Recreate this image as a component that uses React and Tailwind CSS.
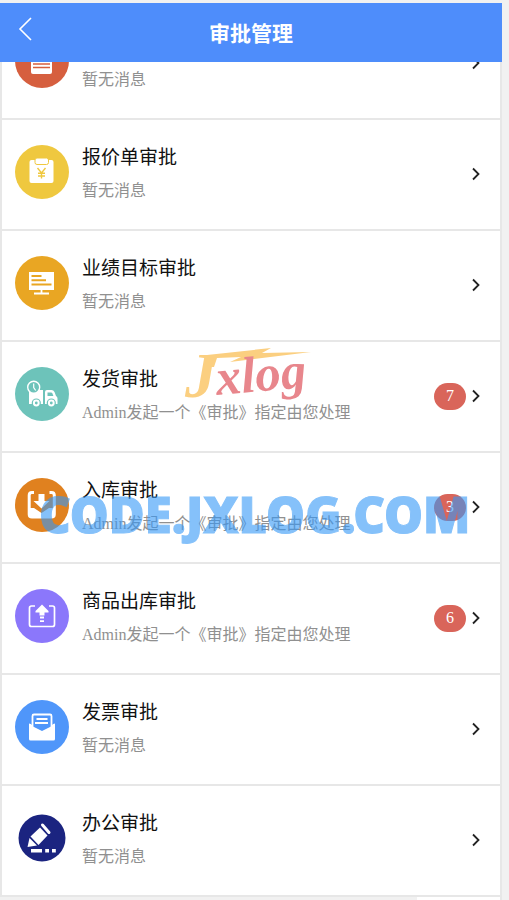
import { useState } from "react";

const EMPTY = "暂无消息";
const PENDING = "Admin发起一个《审批》指定由您处理";

const approvals = [
  { id: "order", title: "订单审批", message: EMPTY, count: 0, Icon: OrderIcon },
  { id: "quote", title: "报价单审批", message: EMPTY, count: 0, Icon: QuoteIcon },
  { id: "target", title: "业绩目标审批", message: EMPTY, count: 0, Icon: TargetIcon },
  { id: "delivery", title: "发货审批", message: PENDING, count: 7, Icon: DeliveryIcon },
  { id: "inbound", title: "入库审批", message: PENDING, count: 3, Icon: InboundIcon },
  { id: "outbound", title: "商品出库审批", message: PENDING, count: 6, Icon: OutboundIcon },
  { id: "invoice", title: "发票审批", message: EMPTY, count: 0, Icon: InvoiceIcon },
  { id: "office", title: "办公审批", message: EMPTY, count: 0, Icon: OfficeIcon },
];

function RoundIcon({ color, r = 27, children }) {
  return (
    <svg viewBox="0 0 54 54" className="h-[54px] w-[54px] shrink-0 self-start" aria-hidden="true">
      <circle cx="27" cy="27" r={r} fill={color} />
      {children}
    </svg>
  );
}

function OrderIcon() {
  return (
    <RoundIcon color="#d65f3f">
      <rect x="16" y="13" width="21" height="27" rx="2" fill="#fff" />
      <path d="M18 25h17M18 30h17M18 33.500h17" stroke="#d65f3f" strokeWidth="1.300" />
    </RoundIcon>
  );
}

function QuoteIcon() {
  return (
    <RoundIcon color="#efc83f">
      <rect x="14.500" y="15" width="24" height="23" rx="2" fill="#fff" />
      <rect x="20" y="13" width="13.500" height="6.500" rx="2" fill="#fff" stroke="#efc83f" strokeWidth="1" />
      <path
        d="M22.500 23l4 5 4-5M26.500 28v5.500M23 28.300h7M23 31h7"
        fill="none"
        stroke="#efc83f"
        strokeWidth="1.400"
      />
    </RoundIcon>
  );
}

function TargetIcon() {
  return (
    <RoundIcon color="#e9a623">
      <path d="M14 16h25v18H14z" fill="#fff" />
      <path d="M26.500 34v3.500M19 37.500h15" stroke="#fff" strokeWidth="1.800" />
      <path d="M16.500 20h10M16.500 24.200h14.500M16.500 28.500h20" stroke="#e9a623" strokeWidth="2" />
    </RoundIcon>
  );
}

function DeliveryIcon() {
  return (
    <RoundIcon color="#6dc3ba">
      <path d="M14 23h14v14H14z" fill="#fff" />
      <path d="M30 25q0-2 2-2h4.500q2 0 3 2l1.500 4q1.500.8 1.500 2.500V37H30z" fill="#fff" />
      <path d="M32.500 25.500h3.500q1 0 1.400 1l1 2.500h-5.900z" fill="#6dc3ba" />
      <circle cx="18.700" cy="20.300" r="6" fill="#6dc3ba" stroke="#fff" strokeWidth="1.400" />
      <path d="M18.700 16.500v4l2 3" fill="none" stroke="#fff" strokeWidth="1.200" />
      <circle cx="21.300" cy="36" r="4.600" fill="#6dc3ba" />
      <circle cx="36.300" cy="36" r="4.600" fill="#6dc3ba" />
      <circle cx="21.300" cy="36" r="2.400" fill="none" stroke="#fff" strokeWidth="2" />
      <circle cx="36.300" cy="36" r="2.400" fill="none" stroke="#fff" strokeWidth="2" />
    </RoundIcon>
  );
}

function InboundIcon() {
  return (
    <RoundIcon color="#e0811f">
      <path
        d="M19 14.500h-2q-2.800 0-2.800 2.800v19q0 2.800 2.800 2.800h19.500q2.800 0 2.800-2.800v-19q0-2.800-2.800-2.800h-2"
        fill="none"
        stroke="#fff"
        strokeWidth="3"
      />
      <path d="M14 30h5l7.500 5 7.500-5h5v9H14z" fill="#fff" />
      <path d="M23.500 16h6v7h5l-8 7.500-8-7.500h5z" fill="#fff" />
    </RoundIcon>
  );
}

function OutboundIcon() {
  return (
    <RoundIcon color="#8b77fb">
      <path
        d="M20 17h-3.500q-2 0-2 2v16.500q0 2 2 2h21q2 0 2-2V19q0-2-2-2H34"
        fill="none"
        stroke="#fff"
        strokeWidth="1.700"
      />
      <path d="M27 15.500l6.500 6.500v1.500h-4v3h-5v-3h-4V22z" fill="#fff" />
      <path d="M25 28.500h4M25 32.200h4" stroke="#fff" strokeWidth="1.800" />
    </RoundIcon>
  );
}

function InvoiceIcon() {
  return (
    <RoundIcon color="#4f96fa">
      <path d="M17.500 27V16q0-1.500 1.500-1.500h16q1.500 0 1.500 1.500v11" fill="none" stroke="#fff" strokeWidth="1.800" />
      <path d="M21.500 19h11M20 23h13" stroke="#fff" strokeWidth="1.800" />
      <path d="M14 24.500l13 6.500 13-6.500V39q0 1.500-1.500 1.500h-23Q14 40.500 14 39z" fill="#fff" />
      <path d="M14 23.500q2 0 3 1.500v3h-3zM40 23.500q-2 0-3 1.500v3h3z" fill="#fff" />
    </RoundIcon>
  );
}

function OfficeIcon() {
  return (
    <RoundIcon color="#1b2480" r={23.5}>
      <path d="M15.500 25.500l9.500-9 7.500 8-9 9.500z" fill="#fff" />
      <path d="M14.500 27l7.500 7.500L12.500 36z" fill="#fff" />
      <path d="M27.500 14l6.500 7.500" stroke="#fff" strokeWidth="3" strokeLinecap="round" />
      <path d="M16 39.700h11M30.200 39.700h3.800M37 39.700h3.800" stroke="#fff" strokeWidth="3.400" />
    </RoundIcon>
  );
}

function Chevron() {
  return (
    <svg viewBox="0 0 8 14" className="h-[14px] w-2 shrink-0" aria-hidden="true">
      <path d="M1 1.500l5.500 5.500L1 12.500" fill="none" stroke="#222" strokeWidth="1.800" />
    </svg>
  );
}

function ApprovalRow({ item }) {
  const { Icon } = item;
  return (
    <li className="border-b-2 border-[#e7e7e7]">
      <a href={`#${item.id}`} className="flex items-center pt-[25px] pr-5 pb-[26px] pl-[13px]">
        <Icon />
        <div className="ml-[13px] min-w-0 flex-1">
          <h2 className="text-[19px] leading-[26px] text-[#111]">{item.title}</h2>
          <p className="mt-2 truncate text-[16px] leading-6 text-[#909090]">{item.message}</p>
        </div>
        {item.count > 0 && (
          <span className="mr-[6px] flex h-[27px] w-8 shrink-0 items-center justify-center rounded-full bg-[#d9655a] text-[16px] text-white">
            {item.count}
          </span>
        )}
        <Chevron />
      </a>
    </li>
  );
}

// Brand mark laid over the list
function BrandMark() {
  return (
    <svg
      viewBox="0 0 140 64"
      className="pointer-events-none absolute top-[345px] left-[180px] h-16 w-[140px] overflow-visible font-['Liberation_Serif',serif] font-bold italic"
      aria-hidden="true"
    >
      <path d="M27 10l64-7-9 5 49-1-81 10 11-5-24 1-3 9h-10z" fill="#fbcf80" />
      <text x="5" y="52" fontSize="64" fill="#fbcf80">
        J
      </text>
      <text x="37" y="50" fontSize="51" fill="#e8868c" transform="rotate(-5 37 50)">
        xlog
      </text>
    </svg>
  );
}

export default function App() {
  const [items] = useState(approvals);

  return (
    <div className="relative min-h-screen overflow-hidden bg-[#f1f1f1] pt-[3px] font-['Liberation_Serif','Noto_Sans_CJK_SC',serif]">
      <div className="mr-[7px]">
        <header className="relative z-10 grid h-[59px] grid-cols-[60px_1fr_60px] items-center bg-[#4e8dfb]">
          <button type="button" aria-label="返回" className="flex h-full items-center pb-2 pl-[18px]">
            <svg viewBox="0 0 14 24" className="h-6 w-[14px]" aria-hidden="true">
              <path d="M13 1L2 12l11 11" fill="none" stroke="#fff" strokeWidth="1.600" />
            </svg>
          </button>
          <h1 className="pt-0.5 text-center text-[21px] leading-7 font-bold text-white">审批管理</h1>
        </header>

        {/* the list is scrolled part way under the header */}
        <ul className="-mt-[53px] border-x-2 border-[#e7e7e7] bg-white">
          {items.map((item) => (
            <ApprovalRow key={item.id} item={item} />
          ))}
        </ul>
        <div className="flex h-2 border-r-2 border-[#e7e7e7] bg-white">
          <div className="w-5/6 bg-[#f1f1f1]" />
        </div>
      </div>

      <BrandMark />
      <div
        className="pointer-events-none absolute top-[480px] left-[39px] font-['Noto_Sans',sans-serif] text-[49px] leading-[68px] font-black whitespace-nowrap text-[#3598f7] opacity-60 [-webkit-text-stroke:1px_#3598f7]"
        aria-hidden="true"
      >
        CODE.JXLOG.COM
      </div>
    </div>
  );
}
